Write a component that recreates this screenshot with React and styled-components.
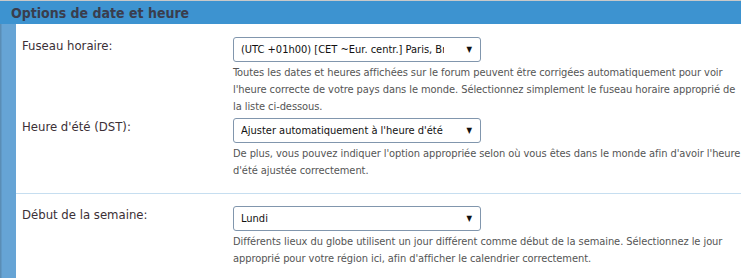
import React from 'react';
import styled, { createGlobalStyle } from 'styled-components';

const Global = createGlobalStyle`
  html, body { margin: 0; padding: 0; background: #fff; }
  body { font-family: "DejaVu Sans Condensed", "DejaVu Sans", sans-serif; }
`;

const Panel = styled.div`
  width: 741px;
  height: 278px;
  overflow: hidden;
  border-top: 1px solid #c9c9c9;
  box-sizing: border-box;
`;

const Header = styled.div`
  height: 23px;
  background: #3d93d0;
  display: flex;
  align-items: center;
  padding-left: 11px;
  font-size: 14px;
  font-weight: bold;
  color: #3a3d4d;
`;

const Body = styled.div`
  display: flex;
  height: 254px;
`;

const Strip = styled.div`
  width: 16px;
  flex: none;
  background: linear-gradient(to right, #5a8db5 0, #5a8db5 1px, #66a4d5 2px, #66a4d5 100%);
`;

const Content = styled.div`
  flex: 1;
  display: flex;
  flex-direction: column;
`;

const Section = styled.div`
  display: flex;
  flex-direction: column;
  gap: 3px;
  padding: ${p => p.$pad};
  border-bottom: ${p => (p.$last ? 'none' : '1px solid #c6def0')};
`;

const Row = styled.div`
  display: grid;
  grid-template-columns: 211px 1fr;
  padding-left: 6px;
`;

const Label = styled.div`
  font-size: 13px;
  color: #3b2f36;
  padding-top: 1px;
`;

const Field = styled.div`
  display: flex;
  flex-direction: column;
  gap: 2px;
`;

const SelectBox = styled.div`
  width: 248px;
  height: 25px;
  box-sizing: border-box;
  border: 1px solid #8196ad;
  border-radius: 3px;
  display: flex;
  align-items: center;
  padding: 0 8px 0 7px;
  font-size: 11px;
  color: #111;
  background: #fff;
  white-space: nowrap;
  overflow: hidden;
`;

const Value = styled.span`
  flex: 1;
  min-width: 0;
  overflow: hidden;
  margin-right: 22px;
`;

const Arrow = styled.span`
  flex: none;
  font-size: 8px;
  color: #111;
`;

const Help = styled.div`
  font-size: 11px;
  letter-spacing: -0.07px;
  line-height: 17px;
  color: #555;
`;

const Option = ({ label, value, help }) => (
  <Row>
    <Label>{label}</Label>
    <Field>
      <SelectBox>
        <Value>{value}</Value>
        <Arrow>▼</Arrow>
      </SelectBox>
      <Help>{help}</Help>
    </Field>
  </Row>
);

export default function App() {
  return (
    <Panel>
      <Global />
      <Header>Options de date et heure</Header>
      <Body>
        <Strip />
        <Content>
          <Section $pad="13px 0 14px">
            <Option
              label="Fuseau horaire:"
              value="(UTC +01h00) [CET ~Eur. centr.] Paris, Bruxelles"
              help="Toutes les dates et heures affichées sur le forum peuvent être corrigées automatiquement pour voir l'heure correcte de votre pays dans le monde. Sélectionnez simplement le fuseau horaire approprié de la liste ci-dessous."
            />
            <Option
              label="Heure d'été (DST):"
              value="Ajuster automatiquement à l'heure d'été"
              help="De plus, vous pouvez indiquer l'option appropriée selon où vous êtes dans le monde afin d'avoir l'heure d'été ajustée correctement."
            />
          </Section>
          <Section $pad="12px 0 0" $last>
            <Option
              label="Début de la semaine:"
              value="Lundi"
              help="Différents lieux du globe utilisent un jour différent comme début de la semaine. Sélectionnez le jour approprié pour votre région ici, afin d'afficher le calendrier correctement."
            />
          </Section>
        </Content>
      </Body>
    </Panel>
  );
}
